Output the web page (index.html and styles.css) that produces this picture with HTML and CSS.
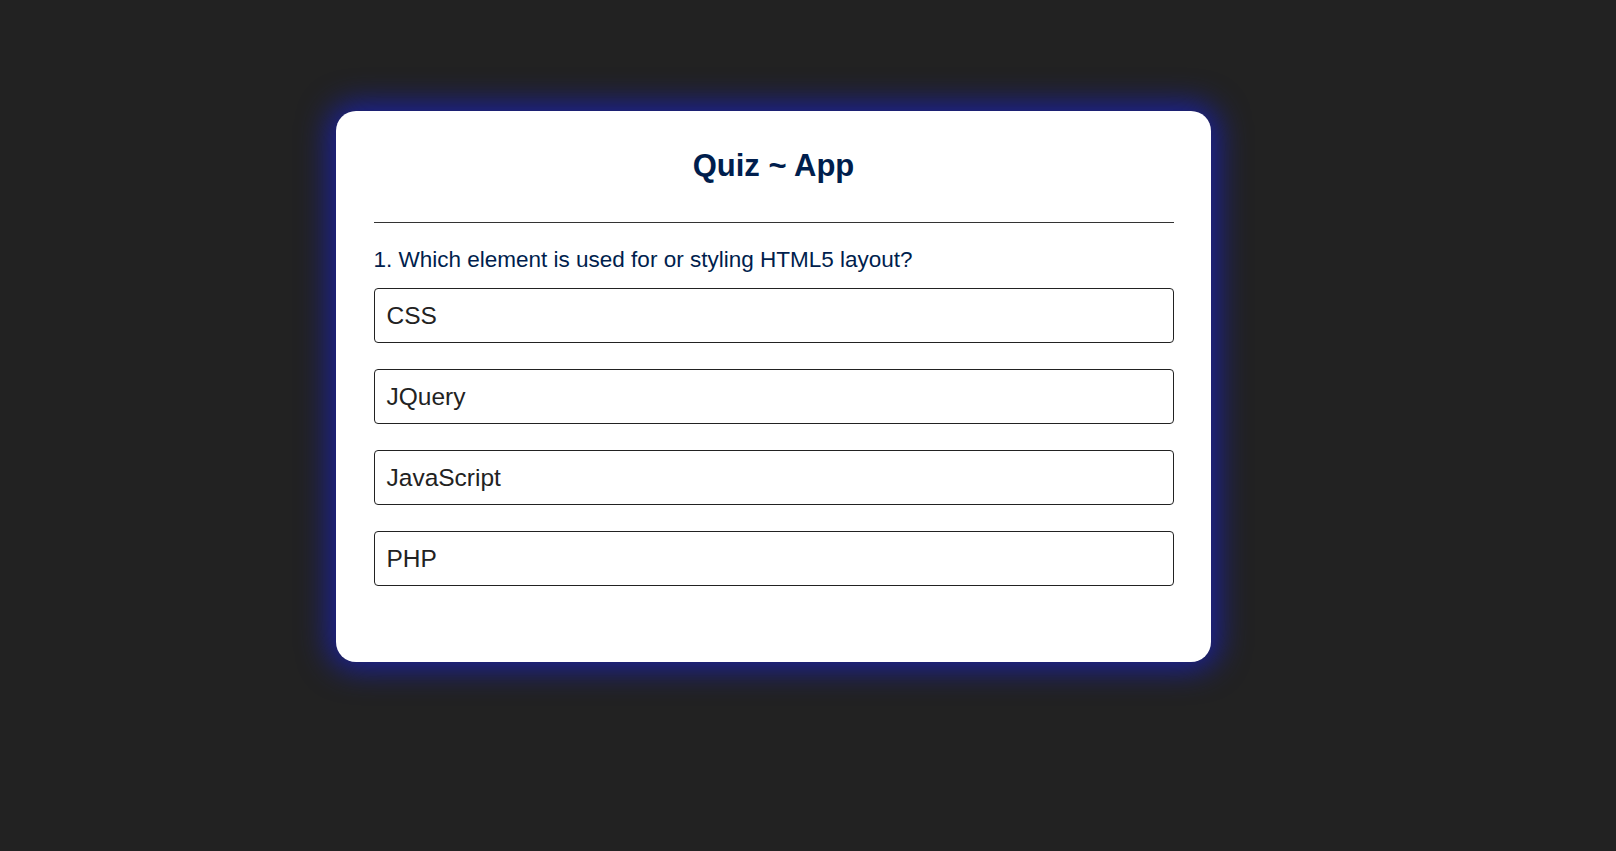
FILE: index.html
```html
<!DOCTYPE html>
<html lang="en">
<head>
<meta charset="UTF-8">
<title>Quiz App</title>
<link rel="stylesheet" href="styles.css">
</head>
<body>
<div class="app">
  <h1 class="title">Quiz ~ App</h1>
  <div class="quiz">
    <h2 class="question">1. Which element is used for or styling HTML5 layout?</h2>
    <div class="answers">
      <button class="btn">CSS</button>
      <button class="btn">JQuery</button>
      <button class="btn">JavaScript</button>
      <button class="btn">PHP</button>
    </div>
  </div>
</div>
</body>
</html>
```
FILE: styles.css
```css
html, body {
  margin: 0;
  padding: 0;
}
body {
  background: #222222;
  font-family: "Liberation Sans", Arial, sans-serif;
  min-height: 851px;
  overflow: hidden;
}
.app {
  width: 800px;
  margin: 111px 0 0 336px;
  background: #ffffff;
  border-radius: 20px;
  padding: 38px 37.5px 75.5px;
  box-shadow: 0 0 30px 8px #1b2198;
}
.title {
  margin: 0;
  font-size: 31px;
  line-height: 34.5px;
  font-weight: bold;
  text-align: center;
  color: #001e4d;
  padding-bottom: 38.5px;
  border-bottom: 1px solid #333333;
}
.question {
  margin: 24px 0 0;
  font-size: 22.5px;
  line-height: 25.5px;
  font-weight: normal;
  color: #001e4d;
}
.answers {
  margin-top: 15.5px;
  display: flex;
  flex-direction: column;
  gap: 26px;
}
.btn {
  display: block;
  width: 100%;
  height: 55px;
  box-sizing: border-box;
  margin: 0;
  padding: 0 12px;
  background: #ffffff;
  color: #222222;
  border: 1px solid #222222;
  border-radius: 4px;
  font-family: "Liberation Sans", Arial, sans-serif;
  font-size: 24.5px;
  font-weight: normal;
  text-align: left;
  cursor: pointer;
}
```
